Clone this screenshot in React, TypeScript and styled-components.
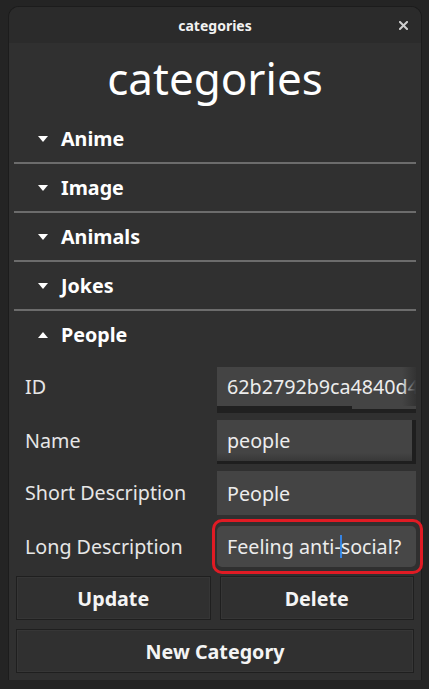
import styled, { createGlobalStyle } from "styled-components";

const categories = [
  { name: "Anime", open: false },
  { name: "Image", open: false },
  { name: "Animals", open: false },
  { name: "Jokes", open: false },
  { name: "People", open: true },
];

const GlobalStyle = createGlobalStyle`
  html, body {
    margin: 0;
    background: #242424;
    font-family: "Noto Sans", "DejaVu Sans", sans-serif;
    color: #ffffff;
  }
`;

const Arrow = ({ up }: { up?: boolean }) => (
  <svg width="10" height="6" viewBox="0 0 10 6">
    {up ? (
      <polygon points="0,6 10,6 5,0" fill="#ffffff" />
    ) : (
      <polygon points="0,0 10,0 5,6" fill="#ffffff" />
    )}
  </svg>
);

const CloseIcon = () => (
  <svg width="9" height="9" viewBox="0 0 9 9">
    <path d="M1 1 L8 8 M8 1 L1 8" stroke="#cfcfcf" strokeWidth="2" strokeLinecap="square" />
  </svg>
);

const App = () => {
  return (
    <>
      <GlobalStyle />
      <Window>
        <TitleBar>
          <TitleText>categories</TitleText>
          <CloseButton>
            <CloseIcon />
          </CloseButton>
        </TitleBar>
        <Content>
          <Heading>categories</Heading>
          {categories.map((cat) => (
            <Expander key={cat.name} $open={cat.open}>
              <ExpanderHeader>
                <Arrow up={cat.open} />
                <span>{cat.name}</span>
              </ExpanderHeader>
            </Expander>
          ))}
          <Form>
            <FieldRow>
              <Label $h={39}>ID</Label>
              <FieldBox>
                <Entry $h={39} $fade>62b2792b9ca4840d4b1c7e2f</Entry>
                <ScrollTrack>
                  <ScrollThumb style={{ width: "68%" }} />
                </ScrollTrack>
              </FieldBox>
            </FieldRow>
            <FieldRow>
              <Label $h={41}>Name</Label>
              <FieldBox>
                <Entry $h={41} $sidebar>people</Entry>
                <BottomShadow />
              </FieldBox>
            </FieldRow>
            <FieldRow>
              <Label $h={44}>Short Description</Label>
              <FieldBox>
                <Entry $h={44}>People</Entry>
              </FieldBox>
            </FieldRow>
            <FieldRow $tight>
              <Label $h={55}>Long Description</Label>
              <FocusRing>
                <Entry $h={41} $focused>
                  Feeling anti-<Cursor />social?
                </Entry>
              </FocusRing>
            </FieldRow>
          </Form>
          <ButtonGrid>
            <Button>Update</Button>
            <Button>Delete</Button>
            <Button $wide>New Category</Button>
          </ButtonGrid>
        </Content>
      </Window>
    </>
  );
};

const Window = styled.div`
  margin: 7px 8px 0 9px;
  height: 673px;
  background: #303030;
  border-radius: 10px 10px 0 0;
  box-shadow: 0 0 0 1px #1c1c1c;
  display: flex;
  flex-direction: column;
`;

const TitleBar = styled.div`
  height: 36px;
  background: #2b2b2b;
  border-radius: 10px 10px 0 0;
  display: flex;
  align-items: center;
  justify-content: center;
  position: relative;
`;

const TitleText = styled.div`
  font-size: 14px;
  font-weight: bold;
  color: #f2f2f2;
`;

const CloseButton = styled.div`
  position: absolute;
  right: 13px;
  top: 14px;
  display: flex;
`;

const Content = styled.div`
  flex: 1;
  padding: 0 5px;
  display: flex;
  flex-direction: column;
`;

const Heading = styled.h1`
  margin: 0;
  height: 72px;
  display: flex;
  align-items: center;
  justify-content: center;
  font-size: 44px;
  font-weight: normal;
  color: #ffffff;
  padding-bottom: 2px;
  box-sizing: border-box;
`;

const Expander = styled.div<{ $open?: boolean }>`
  border-bottom: ${(p) => (p.$open ? "none" : "2px solid #6c6c6c")};
`;

const ExpanderHeader = styled.div`
  height: 47px;
  display: flex;
  align-items: center;
  gap: 13px;
  padding-left: 24px;
  font-size: 19.7px;
  font-weight: bold;
  color: #ffffff;
`;

const Form = styled.div`
  display: flex;
  flex-direction: column;
  gap: 7px;
  margin-top: 9px;
`;

const FieldRow = styled.div<{ $tight?: boolean }>`
  display: grid;
  grid-template-columns: 192px 1fr;
  align-items: start;
  padding-left: 11px;
  margin-top: ${(p) => (p.$tight ? "-3px" : "0")};
`;

const Label = styled.div<{ $h: number }>`
  font-size: 19.7px;
  color: #e6e6e6;
  line-height: ${(p) => p.$h}px;
  height: ${(p) => p.$h}px;
  white-space: nowrap;
`;

const FieldBox = styled.div`
  display: flex;
  flex-direction: column;
  overflow: hidden;
`;

const Entry = styled.div<{ $h: number; $fade?: boolean; $sidebar?: boolean; $focused?: boolean }>`
  height: ${(p) => p.$h}px;
  background: ${(p) => (p.$focused ? "#474747" : "#444444")};
  border-radius: ${(p) => (p.$focused ? "5px" : "0")};
  box-sizing: border-box;
  padding-left: 10px;
  display: flex;
  align-items: center;
  font-size: 19.7px;
  color: #ececec;
  white-space: nowrap;
  overflow: hidden;
  position: relative;
  border-right: ${(p) => (p.$sidebar ? "4px solid #1e1e1e" : "none")};
  ${(p) =>
    p.$fade &&
    `&::after {
      content: "";
      position: absolute;
      right: 0;
      top: 0;
      bottom: 0;
      width: 14px;
      background: linear-gradient(to right, rgba(68,68,68,0), #333333);
    }`}
  ${(p) =>
    p.$sidebar &&
    `background: linear-gradient(to bottom, #444444 80%, #383838 100%);`}
`;

const ScrollTrack = styled.div`
  height: 7px;
  background: linear-gradient(to bottom, #444444 0 3px, #202020 3px);
  display: flex;
`;

const ScrollThumb = styled.div`
  background: #202020;
`;

const BottomShadow = styled.div`
  height: 3px;
  background: #1e1e1e;
`;

const FocusRing = styled.div`
  margin-left: -5px;
  margin-right: -7px;
  border: 3px solid #e01b24;
  border-radius: 10px;
  padding: 4px 4px 4px 2px;
`;

const Cursor = styled.span`
  display: inline-block;
  width: 2px;
  height: 23px;
  background: #3584e4;
  margin: 0 -1px;
  vertical-align: middle;
`;

const ButtonGrid = styled.div`
  display: grid;
  grid-template-columns: 1fr 1fr;
  column-gap: 9px;
  row-gap: 9px;
  padding: 2px 2px 0 2px;
`;

const Button = styled.div<{ $wide?: boolean }>`
  grid-column: ${(p) => (p.$wide ? "1 / -1" : "auto")};
  height: 44px;
  box-sizing: border-box;
  border: 1px solid #1f1f1f;
  background: #303030;
  box-shadow: inset 0 0 0 1px #363636;
  display: flex;
  align-items: center;
  justify-content: center;
  font-size: 19.7px;
  font-weight: bold;
  color: #f4f4f4;
`;

export default App;
